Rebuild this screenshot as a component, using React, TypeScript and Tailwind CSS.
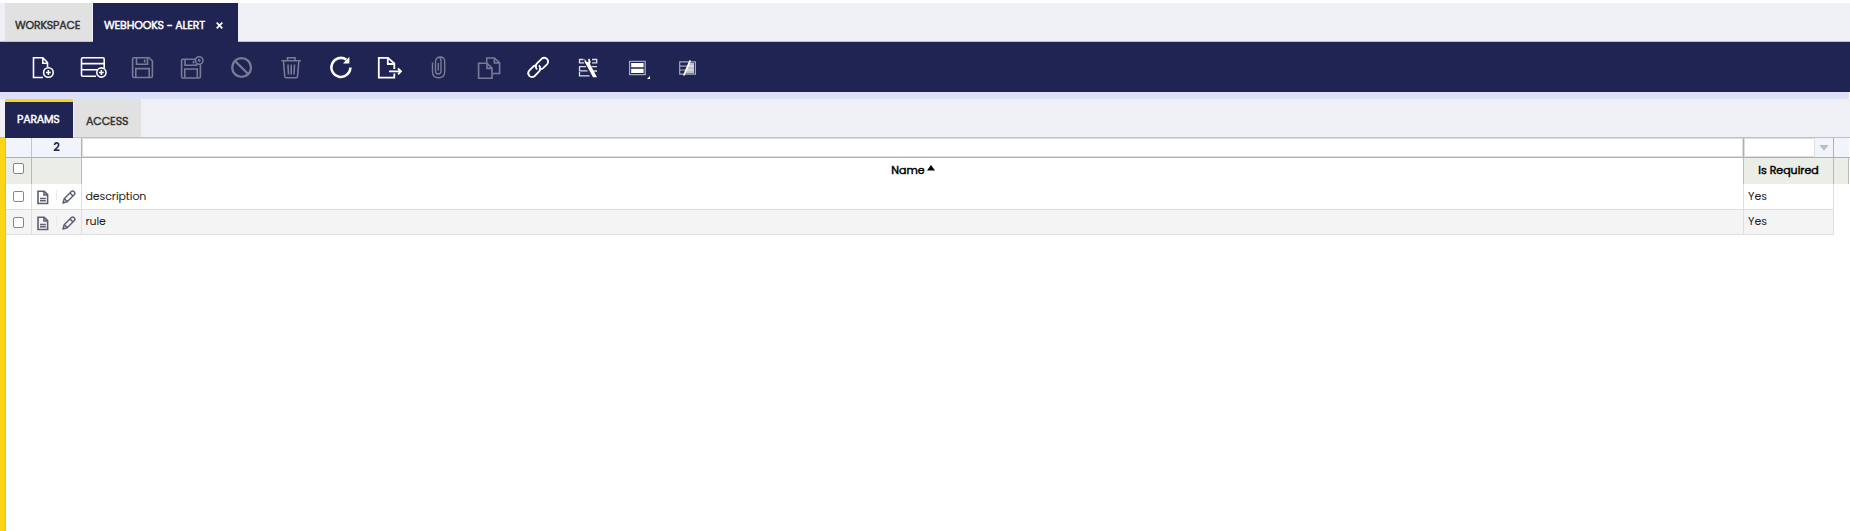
import React from "react";

type Icon = { name: string; dim?: boolean; art: React.ReactNode };

const floppy = (
  <>
    <path d="M5 3.7H20L23.4 7V22.2Q23.4 23.5 22 23.5H5Q3.6 23.5 3.6 22.2V5Q3.6 3.7 5 3.7Z" />
    <path d="M7.5 4V10.3H18.5V4M15.7 5.5V8.5M6.8 23V14.6H20.2V23" />
  </>
);

const icons: Icon[] = [
  {
    name: "New",
    art: (
      <>
        <path d="M14 23.5H4.5V3.8H13.8L18.5 8.5V13M13.8 4V9.2H18.5" />
        <circle cx="19.4" cy="18.5" r="4.8" />
        <path d="M17 18.5H21.8M19.4 16.1V20.9" />
      </>
    ),
  },
  {
    name: "New in grid",
    art: (
      <>
        <path d="M17 22.2H3.8Q2.5 22.2 2.5 21V5Q2.5 3.7 3.8 3.7H23.9Q25.2 3.7 25.2 5V14M2.6 9.6H25M2.6 15.8H18" />
        <circle cx="22.4" cy="18.5" r="4.6" />
        <path d="M20 18.5H24.8M22.4 16.1V20.9" />
      </>
    ),
  },
  { name: "Save", dim: true, art: floppy },
  {
    name: "Save and new",
    dim: true,
    art: (
      <>
        <path d="M16 5.2H3.9Q2.6 5.2 2.6 6.5V22.5Q2.6 24 3.9 24H20Q21.4 24 21.4 22.6V10.5" />
        <path d="M6 5.5V11.3H17.5V10M14.5 7V9.5M5.8 23.6V15H18.3V23.6" />
        <circle cx="20.2" cy="6.5" r="3.8" />
        <circle cx="20.2" cy="6.5" r="0.6" />
      </>
    ),
  },
  {
    name: "Cancel",
    dim: true,
    art: (
      <g strokeWidth="2.3">
        <circle cx="12.6" cy="13.5" r="9.4" />
        <path d="M6 7L19.2 20" />
      </g>
    ),
  },
  {
    name: "Delete",
    dim: true,
    art: (
      <path d="M2.3 6.8H22M8.5 6.5V3.8H16V6.5M4.5 7L5.7 22.3Q5.8 23.8 7.3 23.8H17Q18.5 23.8 18.6 22.3L19.8 7M9 10.5L9.5 20.5M12.2 10.5V20.5M15.5 10.5L15 20.5" />
    ),
  },
  {
    name: "Refresh",
    art: (
      <>
        <path d="M17.3 5.6A9.5 9.5 0 1 0 21.4 13.5" strokeWidth="2.5" />
        <path d="M20.4 2.8V9.5H14Z" fill="currentColor" stroke="none" />
      </>
    ),
  },
  {
    name: "Export",
    art: (
      <>
        <path d="M15.3 15V9.5L9 3.8H-.2V23.7H15.3V19.5M8.8 4V10H15" strokeWidth="1.8" />
        <path d="M10 17.3H22M19 14.3L22 17.3L19 20.3" strokeWidth="1.8" />
      </>
    ),
  },
  {
    name: "Attach",
    dim: true,
    art: (
      <path
        d="M6.5 8V17Q6.5 20 9.3 20Q12 20 12 17V7Q12 3.2 9.5 3.2M3.5 8.5V17.5Q3.5 23.8 9.6 23.8Q15.7 23.8 15.7 17.5V7.5Q15.7 3 11.5 3Q6.7 3 6.5 8M9.3 9V16.5"
        strokeWidth="1.4"
      />
    ),
  },
  {
    name: "Copy",
    dim: true,
    art: (
      <>
        <path d="M7.7 8.8V4H15.4L20.6 8.8V19.5H13.5M15.4 4V9H20.4" />
        <path d="M-.4 9.2H8L13 14.2V24.3H-.4ZM8 9.2V14.4H13" />
      </>
    ),
  },
  {
    name: "Link",
    art: (
      <path
        d="M8 15.5Q5.3 12.2 8.2 9.2L12.6 4.8Q15.2 2.6 17.9 4.9Q20.3 7.5 18 10.3L13.8 14.4Q12.1 15.8 10 15.1M10 11.4Q12.7 14.6 9.9 17.7L5.7 22Q3 24.2 .3 21.9Q-2 19.3 .2 16.6L4.3 12.5Q5.8 11.1 8 11.6"
        strokeWidth="1.8"
      />
    ),
  },
  {
    name: "Process",
    art: (
      <>
        <path
          d="M4.5 5.5H.5V8.8H5M13 5.5H17.7V8.8H13M0 12.7H7M12.5 12.7H18M.5 12.7V16.8H8.5M.5 18V21.8H10.5M14.5 17H18"
          strokeWidth="1.3"
          opacity=".85"
        />
        <path d="M5.6 4.5V7.8Q5.8 9.3 7 10.2L14 23.2H18L11 10Q11.8 8.8 11.6 7.2L10.3 4.5L9 5.2L9.6 7.5L8.2 8.2L7 7Z" fill="currentColor" stroke="none" />
      </>
    ),
  },
  {
    name: "Grid view",
    art: (
      <>
        <path d="M.6 7.4H16.2V20.6H.6Z" strokeWidth="1.3" opacity=".6" />
        <path d="M2.2 9H14.6V13.2H2.2ZM2.2 14.8H14.6V19H2.2Z" fill="currentColor" stroke="none" />
        <path d="M21 22V25H18Z" fill="currentColor" stroke="none" />
      </>
    ),
  },
  {
    name: "Toggle view",
    art: (
      <>
        <path d="M10.5 9H15V19.2H6.2Z" fill="#bfc0cc" stroke="none" />
        <path d="M.7 7.8H16.4V20.2H.7ZM1 12.2H15M1 16H15" strokeWidth="1.2" opacity=".6" />
        <path d="M4.8 21.5L11.3 6.3" strokeWidth="1.8" />
      </>
    ),
  },
];

const rows = [
  { name: "description", required: "Yes", tone: "bg-white", height: "h-[26px]", text: "pt-[3px]" },
  { name: "rule", required: "Yes", tone: "bg-[#f4f4f4]", height: "h-[25px]", text: "pt-[2px]" },
];

const columns = "grid grid-cols-[26px_50px_1662px_90px_15px]";

function Check() {
  return (
    <input
      type="checkbox"
      className="block h-[11px] w-[11px] appearance-none rounded-[2px] border border-[#7d82b5] bg-white"
    />
  );
}

function DocIcon() {
  return (
    <svg className="shrink-0" width="12" height="15" viewBox="0 0 12 15" fill="none" stroke="#5d6070" strokeWidth="1.6">
      <path d="M1 1.3H7.2L10.6 4.7V13.5H1ZM7 1.6V5H10.4" />
      <path d="M3 8.4H8.8M3 10.7H8.8" strokeWidth="1.5" />
    </svg>
  );
}

function PencilIcon() {
  return (
    <svg className="shrink-0" width="14" height="14" viewBox="0 0 14 14" fill="none" stroke="#5d6070" strokeWidth="1.5" strokeLinejoin="round">
      <path d="M1 13L2.2 8.7L9.4 1.5Q10.7.4 12.1 1.7Q13.5 3.1 12.4 4.5L5.2 11.8ZM8 3L11 6M2.5 8.8L5.1 11.5" />
    </svg>
  );
}

export default function App() {
  return (
    <div className="flex h-[531px] w-[1850px] flex-col overflow-hidden bg-white font-[Poppins,Inter,sans-serif] text-[11px] leading-[18px] text-[#222]">
      <nav className="mt-[3px] flex h-[39px] shrink-0 border-b border-[#bfc0c8] bg-[#eff0f6] pl-[5px] [-webkit-text-stroke:0.45px]">
        <div className="flex w-[87px] items-center bg-[#e1e1e1] pl-[10px] pt-[5px] tracking-[-0.2px] text-[#333]">WORKSPACE</div>
        <div className="ml-px flex h-[39px] w-[145px] items-center bg-[#202452] pl-[11px] pt-[4px] text-white">
          <span className="w-[102px] whitespace-nowrap tracking-[-0.15px]">WEBHOOKS - ALERT</span>
          <svg className="ml-[10px] mt-px" width="7" height="7" viewBox="0 0 7 7" stroke="white" strokeWidth="1.7">
            <path d="M.7.7L6.3 6.3M6.3.7L.7 6.3" />
          </svg>
        </div>
      </nav>

      <div className="flex h-[50px] shrink-0 items-center gap-[22px] bg-[#202452] pl-[29px] pt-[2px]">
        {icons.map((icon) => (
          <button key={icon.name} aria-label={icon.name} className={icon.dim ? "text-[#787b98]" : "text-white"}>
            <svg
              className="block overflow-visible"
              width="28"
              height="28"
              viewBox="0 0 28 28"
              fill="none"
              stroke="currentColor"
              strokeWidth="1.6"
            >
              {icon.art}
            </svg>
          </button>
        ))}
      </div>
      <div className="mr-px h-[7px] shrink-0 bg-[#dde0f7]" />

      <nav className="flex h-[39px] shrink-0 border-b border-[#bfc0c4] bg-[#eff0f6] pl-[5px] [-webkit-text-stroke:0.45px]">
        <div className="flex h-[39px] w-[68px] items-center border-t-[3px] border-[#fcd616] bg-[#202452] pb-[3px] pl-[12px] tracking-[-0.2px] text-white">
          PARAMS
        </div>
        <div className="ml-px flex w-[67px] items-center bg-[#e1e1e1] pl-[12px] pt-[5px] tracking-[-0.1px] text-[#333]">ACCESS</div>
      </nav>

      <div className="flex min-h-0 flex-1">
        <div className="w-[5px] bg-[#fcd616]" />
        <div className="flex-1 border-l border-[#b9bbb9]">
          <div className={`${columns} h-[20px] border-b border-[#b0b3ad]`}>
            <div className="border-r border-[#c4c6c4] bg-[#f1f5fb]" />
            <div className="border-r border-[#b0b3ad] bg-[#f1f5fb] text-center text-[11.5px] font-semibold text-[#202452]">2</div>
            <div className="border-r border-[#b0b3ad]">
              <div className="h-[19px] border border-[#dedede]" />
            </div>
            <div className="flex border-r border-[#b0b3ad] bg-[#f1f5fb]">
              <div className="w-[71px] border border-[#dedede] bg-white" />
              <svg className="ml-[5px] mt-[7px]" width="8" height="6" viewBox="0 0 8 6" fill="#bdbdbd">
                <path d="M0 0H8V1L4 5.5L0 1Z" />
              </svg>
            </div>
            <div className="bg-[#f1f5fb]" />
          </div>

          <div className={`${columns} h-[26px] text-black [-webkit-text-stroke:0.45px]`}>
            <div className="border-r border-[#b9bbb5] bg-[#ebede7] pl-[7px] pt-[5px]">
              <Check />
            </div>
            <div className="border-r border-[#b9bbb5] bg-[#ebede7]" />
            <div className="flex justify-center border-r border-[#b9bbb5] pl-px pt-[3px]">
              <span>Name</span>
              <svg className="ml-[2px] mt-[4px]" width="8" height="6" viewBox="0 0 8 6">
                <path d="M4 0L8 5.5H0Z" />
              </svg>
            </div>
            <div className="border-r border-[#b9bbb5] bg-[#ebede7] pt-[3px] text-center">Is Required</div>
            <div className="border-r border-[#b9bbb5] bg-[#ebede7]" />
          </div>

          {rows.map((row) => (
            <div key={row.name} className={`${columns} ${row.height}`}>
              <div className={`border-b border-r border-[#dedede] pl-[7px] pt-[7px] ${row.tone}`}>
                <Check />
              </div>
              <div className={`flex border-b border-r border-[#dedede] pl-[5px] pt-[6px] ${row.tone}`}>
                <DocIcon />
                <span className="ml-[7px] mr-[5px] h-[10px] w-px shrink-0 bg-[#e9e9e9]" />
                <PencilIcon />
              </div>
              <div className={`border-b border-r border-[#dedede] pl-[3.5px] tracking-[-0.08px] ${row.text} ${row.tone}`}>{row.name}</div>
              <div className={`border-b border-r border-[#dedede] pl-[4px] ${row.text} ${row.tone}`}>{row.required}</div>
            </div>
          ))}
        </div>
      </div>
    </div>
  );
}
